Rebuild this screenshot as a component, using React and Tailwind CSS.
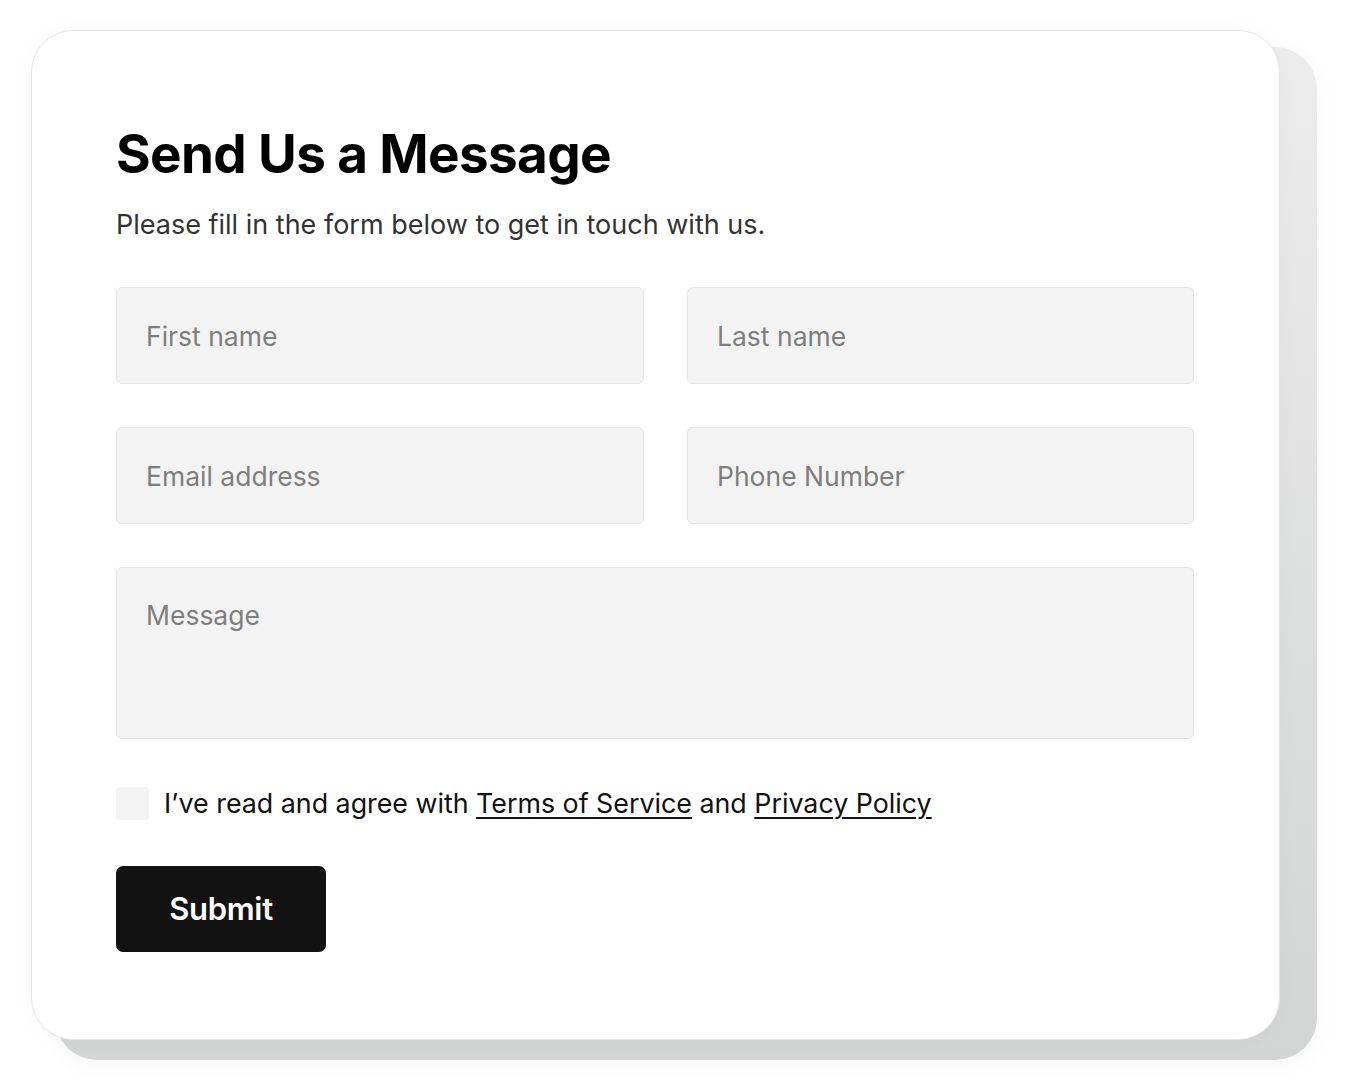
import React from 'react';

const font = { fontFamily: 'Inter, "Noto Sans", sans-serif' };

function Field({ placeholder, className = '' }) {
  return (
    <input
      type="text"
      placeholder={placeholder}
      className={`h-[97px] rounded-[6px] border border-[#e4e4e4] bg-[#f3f3f3] px-[29px] text-[26.5px] text-[#222] placeholder:text-[#7e7e7e] outline-none ${className}`}
    />
  );
}

export default function App() {
  return (
    <div className="min-h-[1092px] w-[1352px] bg-white" style={font}>
      <div className="relative pt-[30px] pl-[31px]">
        <div className="absolute left-[55px] top-[47px] h-[1013px] w-[1262px] rounded-[42px] bg-gradient-to-b from-[#ececec] to-[#d3d4d4] shadow-[0_6px_24px_rgba(0,0,0,0.04)]" />
        <div className="relative h-[1010px] w-[1249px] rounded-[42px] border border-[#e6e6e6] bg-white px-[84px] pt-[91px] shadow-[0_0_20px_rgba(0,0,0,0.03)]">
          <h1 className="text-[53px] font-bold leading-[64px] tracking-[-0.012em] text-black">Send Us a Message</h1>
          <p className="mt-[22px] text-[27px] leading-[34px] text-[#333]">
            Please fill in the form below to get in touch with us.
          </p>

          <form className="mt-[45px]">
            <div className="grid grid-cols-[528px_507px] gap-x-[43px] gap-y-[43px]">
              <Field placeholder="First name" />
              <Field placeholder="Last name" />
              <Field placeholder="Email address" />
              <Field placeholder="Phone Number" />
            </div>
            <textarea
              placeholder="Message"
              className="mt-[43px] block h-[172px] w-[1078px] resize-none rounded-[6px] border border-[#e4e4e4] bg-[#f3f3f3] px-[29px] py-[30px] text-[26.5px] leading-[34px] text-[#222] placeholder:text-[#7e7e7e] outline-none"
            />

            <label className="mt-[47px] flex items-center gap-[15px] text-[26.8px] leading-[34px] text-[#111]">
              <span className="block h-[33px] w-[33px] rounded-[4px] bg-[#f3f3f3]" />
              <span>
                I’ve read and agree with{' '}
                <a href="#" className="underline underline-offset-[4px] decoration-[2px]">Terms of Service</a>{' '}
                and{' '}
                <a href="#" className="underline underline-offset-[4px] decoration-[2px]">Privacy Policy</a>
              </span>
            </label>

            <button
              type="button"
              className="mt-[46px] block h-[86px] w-[210px] rounded-[7px] bg-[#121212] text-[31px] font-semibold tracking-[-0.01em] text-white"
            >
              Submit
            </button>
          </form>
        </div>
      </div>
    </div>
  );
}
